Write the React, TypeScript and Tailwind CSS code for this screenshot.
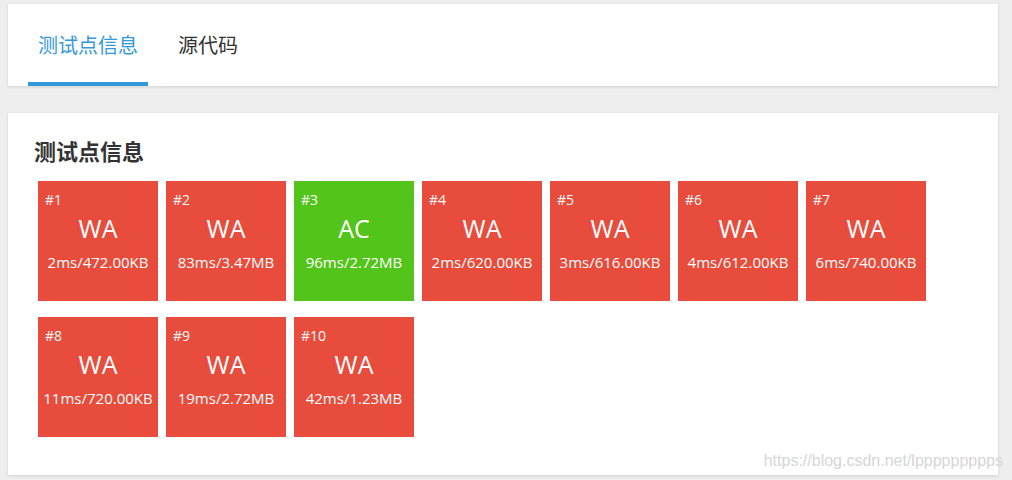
import React from 'react';

type Point = { id: number; status: 'WA' | 'AC'; stat: string };

const points: Point[] = [
  { id: 1, status: 'WA', stat: '2ms/472.00KB' },
  { id: 2, status: 'WA', stat: '83ms/3.47MB' },
  { id: 3, status: 'AC', stat: '96ms/2.72MB' },
  { id: 4, status: 'WA', stat: '2ms/620.00KB' },
  { id: 5, status: 'WA', stat: '3ms/616.00KB' },
  { id: 6, status: 'WA', stat: '4ms/612.00KB' },
  { id: 7, status: 'WA', stat: '6ms/740.00KB' },
  { id: 8, status: 'WA', stat: '11ms/720.00KB' },
  { id: 9, status: 'WA', stat: '19ms/2.72MB' },
  { id: 10, status: 'WA', stat: '42ms/1.23MB' },
];

const font = { fontFamily: '"Open Sans", "Noto Sans CJK SC", sans-serif' };

const PointBox: React.FC<{ p: Point }> = ({ p }) => (
  <div
    className={`flex h-[120px] w-[120px] flex-col text-white ${
      p.status === 'AC' ? 'bg-[#52c41a]' : 'bg-[#e74c3c]'
    }`}
  >
    <div className="pl-[7px] pt-[10px] text-[14px] leading-[18px]">#{p.id}</div>
    <div className="mt-[4px] text-center text-[25px] leading-[30px]">{p.status}</div>
    <div className="mt-[9px] whitespace-nowrap text-center text-[15px] leading-[20px]">{p.stat}</div>
  </div>
);

export default function App() {
  return (
    <div className="relative h-[480px] w-[1012px] overflow-hidden bg-[#eeeeee] pt-[4px]" style={font}>
      <div className="ml-[8px] mr-[14px] flex h-[82px] bg-white pl-[20px] shadow-[0_1px_3px_rgba(0,0,0,0.12)]">
        <div className="flex h-full w-[120px] flex-col border-b-4 border-[#3498db]">
          <span className="pl-[10px] pt-[29px] text-[20px] leading-[26px] text-[#3498db]">测试点信息</span>
        </div>
        <div className="ml-[20px] flex h-full w-[80px] flex-col">
          <span className="pl-[10px] pt-[29px] text-[20px] leading-[26px] text-[#333333]">源代码</span>
        </div>
      </div>

      <div className="ml-[8px] mr-[14px] mt-[27px] h-[362px] bg-white pl-[30px] pt-[23px] shadow-[0_1px_3px_rgba(0,0,0,0.12)]">
        <h2 className="-ml-[4px] text-[22px] font-bold leading-[30px] text-[#333333]">测试点信息</h2>
        <div className="mt-[15px] flex w-[900px] flex-wrap gap-x-[8px] gap-y-[16px]">
          {points.map((p) => (
            <PointBox key={p.id} p={p} />
          ))}
        </div>
      </div>

      <div
        className="absolute bottom-[7px] right-[9px] text-[16px] text-[#d6d6d6]"
        style={{ fontFamily: '"Liberation Sans", Arial, sans-serif' }}
      >
        https://blog.csdn.net/lppppppppps
      </div>
    </div>
  );
}
